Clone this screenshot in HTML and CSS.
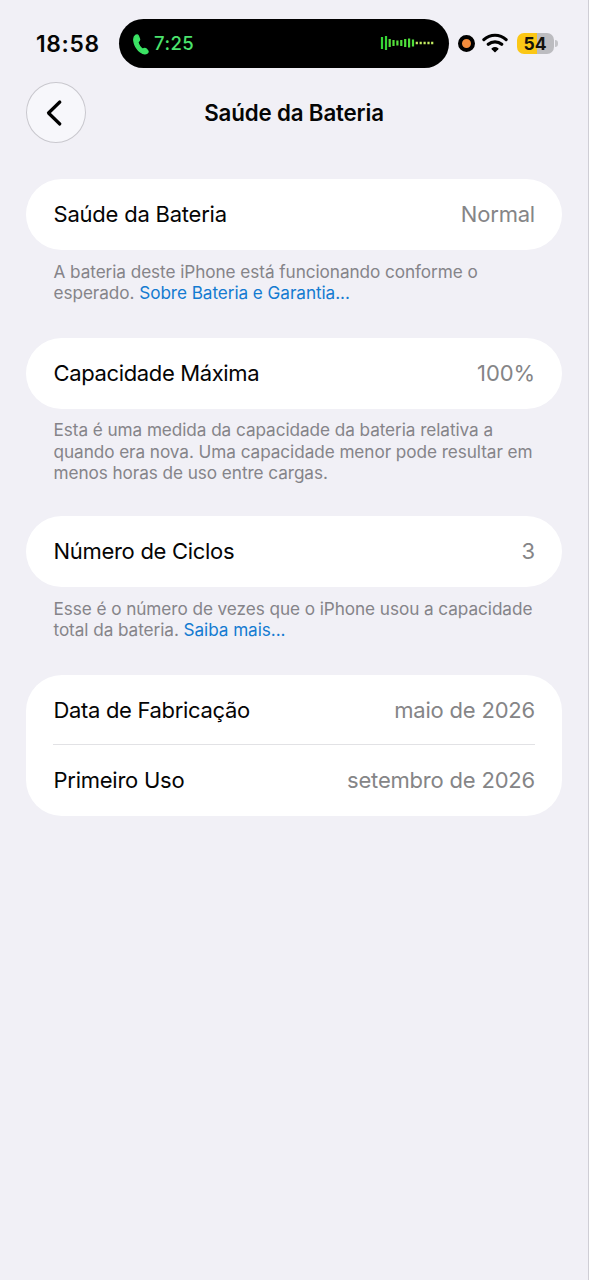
FILE: index.html
```
<!DOCTYPE html>
<html lang="pt-BR">
<head>
<meta charset="utf-8">
<title>Saúde da Bateria</title>
<link rel="stylesheet" href="styles.css">
</head>
<body>
<div class="screen">
  <header class="status">
    <span class="time">18:58</span>
    <div class="island">
      <svg class="phone" width="16" height="21" viewBox="0 0 16 21"><path d="M2.600 1.300C3.800.6 4.900.8 5.400 1.900L6.500 4.900C6.900 6 6.500 6.700 5.500 7.500C4.900 8.100 4.900 8.700 5.200 9.600C6 11.600 7.100 13.200 8.700 14.500C9.400 15.100 10 15.100 10.700 14.700C11.700 14.200 12.500 14.300 13.300 15L14.700 16.600C15.300 17.400 15.200 18.300 14.400 18.900C12.400 20.300 10 19.900 7.400 18C4.400 15.600 2.200 12.200 1.200 8.700C.4 5.500.8 2.600 2.600 1.300Z" fill="#3be364" stroke="#3be364" stroke-width="1.300"/></svg>
      <span class="call">7:25</span>
      <svg class="wave" width="54" height="16" viewBox="0 0 54 16" stroke-width="2.200">
        <path d="M2 2v12M6 1v14" stroke="#35d636"/>
        <path d="M9.700 4v8M13.500 5v6M17.400 5.500v5" stroke="#55e03b"/>
        <path d="M21.300 5v6M25.200 4v8M29.100 3.500v9M33 4.500v7" stroke="#4fe03b"/>
        <path d="M36.800 6.800v2.400M40.700 6.800v2.400M44.600 6.800v2.400M48.500 6.800v2.400M52.200 6.800v2.400" stroke="#c5ee62"/>
      </svg>
    </div>
    <span class="mic"></span>
    <svg class="wifi" width="26" height="20" viewBox="0 0 26 20" fill="none" stroke="#000" stroke-width="3.200" stroke-linecap="round"><path d="M1.900 6.600C8.200.8 17.800.8 24.100 6.600M6.300 11.200C10.100 8 15.900 8 19.700 11.200"/><path d="M9.700 15.300C11.700 13.600 14.300 13.600 16.300 15.300Q16.800 15.800 16.300 16.300L13.600 18.900Q13 19.400 12.400 18.900L9.700 16.300Q9.200 15.800 9.700 15.300Z" fill="#000" stroke="none"/></svg>
    <div class="battery"><span class="level">54</span><span class="cap"></span></div>
  </header>
  <nav class="nav">
    <button class="back" aria-label="Voltar"><svg class="chevron" width="18" height="28" viewBox="0 0 18 28" fill="none" stroke="#000" stroke-width="3.200" stroke-linecap="round" stroke-linejoin="round"><path d="M14.800 3L3.500 14L14.800 25"/></svg></button>
    <h1 class="title">Saúde da Bateria</h1>
  </nav>
  <main class="list">
    <section class="card"><div class="row"><span class="label l1">Saúde da Bateria</span><span class="value">Normal</span></div></section>
    <p class="note">A bateria deste iPhone está funcionando conforme o<br>esperado. <a class="link">Sobre Bateria e Garantia...</a></p>
    <section class="card"><div class="row"><span class="label l2">Capacidade Máxima</span><span class="value percent">100%</span></div></section>
    <p class="note tall">Esta é uma medida da capacidade da bateria relativa a<br>quando era nova. Uma capacidade menor pode resultar em<br>menos horas de uso entre cargas.</p>
    <section class="card"><div class="row"><span class="label l3">Número de Ciclos</span><span class="value">3</span></div></section>
    <p class="note">Esse é o número de vezes que o iPhone usou a capacidade<br>total da bateria. <a class="link">Saiba mais...</a></p>
    <section class="card double"><div class="row first"><span class="label l4">Data de Fabricação</span><span class="value">maio de 2026</span></div><div class="row second"><span class="label l5">Primeiro Uso</span><span class="value">setembro de 2026</span></div></section>
  </main>
</div>
</body>
</html>
```
FILE: styles.css
```
* { box-sizing: border-box; }
body { margin: 0; font-family: Inter, "Liberation Sans", sans-serif; background: #f1f0f6; color: #050505; }
.screen { width: 589px; height: 1280px; overflow: hidden; border-right: 1px solid #cfced5; }
.status { height: 68px; padding: 19px 0 0 36px; display: flex; align-items: flex-start; }
.time { width: 83px; font-size: 22.800px; line-height: 49px; font-weight: 600; letter-spacing: .65px; white-space: nowrap; }
.island { width: 330px; height: 49px; border-radius: 25px; background: #000; display: flex; align-items: center; padding: 0 15px 2px 14px; }
.phone { margin-top: 3px; }
.call { margin-left: 5px; color: #4be26d; font-size: 18.500px; font-weight: 500; letter-spacing: .45px; }
.wave { margin-left: auto; }
.mic { width: 17px; height: 17px; margin: 16px 0 0 9px; border: 4px solid #000; border-radius: 50%; background: #f28b3c; }
.wifi { margin: 14px 0 0 7px; }
.battery { position: relative; width: 37px; height: 21px; margin: 14px 0 0 9px; border-radius: 7px; background: linear-gradient(90deg, #fbc716 54%, #bcbcc0 54%); text-align: center; }
.level { padding-right: 1px; font-size: 17.500px; line-height: 21px; font-weight: 650; display: block; color: #15120b; }
.cap { position: absolute; right: -4px; top: 7px; width: 3px; height: 7px; border-radius: 0 3px 3px 0; background: #c4c4c8; }
.nav { height: 111px; padding: 14px 26px 0; display: grid; grid-template-columns: 60px 1fr 60px; align-items: start; }
.back { width: 60px; height: 61px; padding: 0; border: 1px solid #c9c8ce; border-radius: 50%; background: #f7f7fb; display: flex; align-items: center; justify-content: center; }
.chevron { margin-right: 5px; }
.title { margin: 0; text-align: center; font-size: 22.300px; line-height: 61px; font-weight: 600; letter-spacing: -.15px; white-space: nowrap; }
.list { padding: 0 26px; }
.card { height: 71px; border-radius: 36px; background: #fff; padding: 0 27px; }
.row { height: 71px; padding-bottom: 1px; display: flex; justify-content: space-between; align-items: center; font-size: 22px; white-space: nowrap; }
.label { margin-left: .5px; }
.l1 { letter-spacing: -.22px; }
.l2 { letter-spacing: -.36px; }
.l3 { letter-spacing: -.3px; }
.l4 { letter-spacing: -.33px; }
.l5 { letter-spacing: -.25px; }
.value { color: #858587; letter-spacing: -.2px; }
.percent { letter-spacing: -.1px; }
.double { height: 141px; }
.first { height: 69px; padding-bottom: 0; }
.second { height: 72px; border-top: 1px solid #e2e2e5; }
.note { height: 88px; margin: 0; padding: 10.500px 27px 0 27.500px; font-size: 17.200px; line-height: 21.500px; letter-spacing: -.07px; color: #858489; white-space: nowrap; }
.tall { height: 107px; padding-top: 10px; }
.link { color: #147bd1; }
```
